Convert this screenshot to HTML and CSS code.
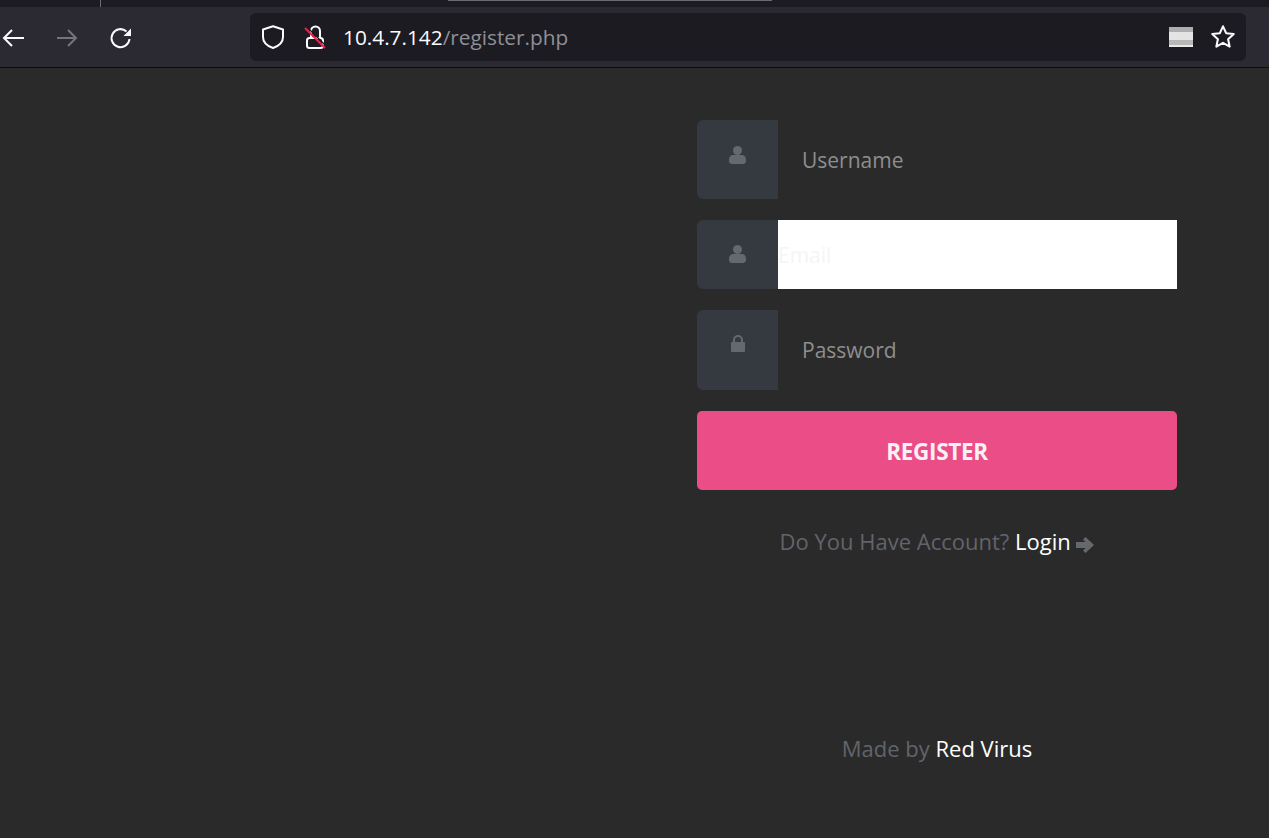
FILE: index.html
```html
<!DOCTYPE html>
<html lang="en">
<head>
<meta charset="utf-8">
<title>Register</title>
<link rel="stylesheet" href="styles.css">
</head>
<body>
<header class="browser">
  <div class="tabstrip"><span class="tab-sep"></span><span class="tab-line"></span></div>
  <div class="toolbar">
    <svg class="nav back" viewBox="0 0 24 24" width="24" height="24"><path d="M23 12H3.500M11 4l-8 8 8 8" fill="none" stroke="#fbfbfe" stroke-width="2"/></svg>
    <svg class="nav forward" viewBox="0 0 24 24" width="24" height="24"><path d="M2 12h19M13 4l8 8-8 8" fill="none" stroke="#75747b" stroke-width="2"/></svg>
    <svg class="nav reload" viewBox="0 0 24 24" width="24" height="24"><path d="M20.500 13a9 9 0 1 1-3-7.600" fill="none" stroke="#fbfbfe" stroke-width="2"/><path d="M22 2.500V10h-7.500z" fill="#fbfbfe"/></svg>
    <div class="urlbar">
      <svg class="ic-shield" viewBox="0 0 24 24" width="24" height="24"><path d="M12 1.200L22 4.500V12C22 18 17 21.300 12 23C7 21.300 2 18 2 12V4.500Z" fill="none" stroke="#fbfbfe" stroke-width="2" stroke-linejoin="round"/></svg>
      <svg class="ic-lock" viewBox="0 0 24 24" width="24" height="24"><path d="M7 12V6a4.500 4.500 0 0 1 9 0v6" fill="none" stroke="#fbfbfe" stroke-width="2"/><rect x="3" y="13" width="16" height="10" rx="2.500" fill="none" stroke="#fbfbfe" stroke-width="2"/><path d="M2.500 1.500l20 20" stroke="#1c1b22" stroke-width="1.500"/><path d="M1 3l20 20" stroke="#e22850" stroke-width="2"/></svg>
      <div class="url"><span class="host">10.4.7.142</span><span class="path">/register.php</span></div>
      <span class="reader"></span>
      <svg class="ic-star" viewBox="1 1 22 22" width="24" height="24"><path d="M12 2.200l2.900 6.300 6.900.8-5.100 4.700 1.400 6.800-6.100-3.400-6.100 3.400 1.400-6.800-5.100-4.700 6.900-.8z" fill="none" stroke="#fbfbfe" stroke-width="1.900" stroke-linejoin="round"/></svg>
    </div>
  </div>
</header>
<main class="page">
  <form class="form">
    <div class="field field-tall">
      <span class="addon"><svg viewBox="0 0 17 18" width="17" height="18"><circle cx="8.500" cy="4.500" r="4.500"/><path d="M0 14c0-4 2.500-5 4-5h9c1.500 0 4 1 4 5v1c0 1.500-1 3-3 3H3c-2 0-3-1.500-3-3z"/></svg></span>
      <span class="control">Username</span>
    </div>
    <div class="field field-email">
      <span class="addon"><svg viewBox="0 0 17 18" width="17" height="18"><circle cx="8.500" cy="4.500" r="4.500"/><path d="M0 14c0-4 2.500-5 4-5h9c1.500 0 4 1 4 5v1c0 1.500-1 3-3 3H3c-2 0-3-1.500-3-3z"/></svg></span>
      <span class="control control-filled">Email</span>
    </div>
    <div class="field field-last">
      <span class="addon"><svg viewBox="0 0 14 17" width="14" height="17"><path d="M3 7V5a4 4 0 0 1 8 0v2" fill="none" stroke="#65686d" stroke-width="2"/><rect y="7" width="14" height="10" rx="1"/></svg></span>
      <span class="control">Password</span>
    </div>
    <button class="submit" type="button">REGISTER</button>
    <p class="login">Do You Have Account? <a class="link">Login</a> <svg class="arrow" viewBox="0 0 18 16" width="18" height="16"><path d="M9.500 0l8.500 8-8.500 8-2.500-2.500L9.500 11H0V5h9.500L7 2.500z"/></svg></p>
    <p class="credit">Made by <a class="link-soft">Red Virus</a></p>
  </form>
</main>
</body>
</html>
```
FILE: styles.css
```css
* { box-sizing: border-box; }
html, body { margin: 0; height: 100%; }
body {
  background: #2a2a2a;
  font-family: "Open Sans", "Noto Sans", "Liberation Sans", sans-serif;
  overflow: hidden;
}
.browser { height: 68px; background: #2b2a33; border-bottom: 1px solid #0c0c0d; }
.tabstrip { height: 7px; background: #1c1b22; display: flex; align-items: flex-start; }
.tab-sep { width: 1px; height: 7px; background: #6a6a70; margin-left: 100px; }
.tab-line { width: 324px; height: 1px; background: #6a6a70; margin-left: 347px; }
.toolbar { display: flex; align-items: center; height: 60px; padding-left: 1px; }
.nav { flex: none; margin-top: 2px; }
.forward { margin-left: 30px; }
.reload { margin-left: 30px; }
.urlbar {
  width: 996px; height: 48px; margin-left: 117px; background: #1c1b22; border-radius: 6px;
  display: flex; align-items: center; padding: 0 11px; flex: none;
}
.ic-lock { margin-left: 19px; }
.url { margin-left: 15px; font-size: 20.800px; flex: 1; white-space: nowrap; }
.host { color: #fbfbfe; }
.path { color: #8f8f96; }
.reader {
  width: 24px; height: 20px; margin-right: 18px;
  background: linear-gradient(#aeaeae 0 5px, #e4e4e4 5px 13px, #b8b8b8 13px 18px, #e8e8e8 18px);
}
.page { padding: 52px 0 0 697px; }
.form { width: 480px; }
.field { display: flex; margin-bottom: 21px; }
.field-tall { height: 79px; }
.field-email { height: 69px; }
.field-last { height: 80px; }
.addon {
  width: 81px; background: #343a40; border-radius: 6px 0 0 6px; flex: none;
  display: flex; justify-content: center; padding-top: 26px;
}
.addon svg { fill: #65686d; }
.field-email .addon, .field-last .addon { padding-top: 25px; }
.control { flex: 1; padding-left: 24px; display: flex; align-items: center; font-size: 21px; color: #8e8e8e; }
.control-filled { background: #fff; padding: 0; color: #f5f5f6; }
.submit {
  display: block; width: 100%; height: 79px; border: 0; padding: 1px 0 0; border-radius: 5px; background: #eb4d87;
  color: #f8f0f4; font: 700 22.500px "Open Sans", "Noto Sans", sans-serif; letter-spacing: -.3px;
}
.login { margin: 35px 0 0; text-align: center; font-size: 22px; line-height: 32px; color: #62646a; }
.link { color: #fff; }
.arrow { fill: #65686d; vertical-align: -3px; }
.credit { margin: 175px 0 0; text-align: center; font-size: 22px; line-height: 32px; color: #62646a; }
.link-soft { color: #fff; }
```
